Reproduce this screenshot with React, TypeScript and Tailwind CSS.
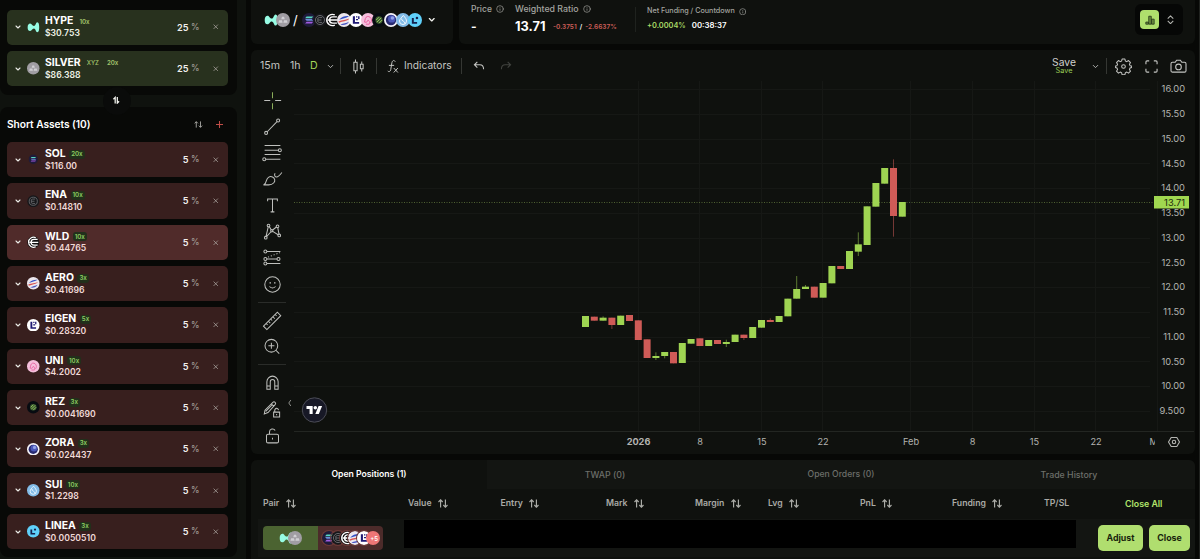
import { type ReactNode } from "react"
import { ChevronDown, Info, X } from "lucide-react"
import clsx from "clsx"

interface Asset {
  symbol: string
  price: string
  leverage: string
  weight: number
  tag?: string
  highlighted?: boolean
}

interface Candle {
  open: number
  close: number
  up: boolean
  high?: number
  low?: number
}

const longAssets: Asset[] = [
  { symbol: "HYPE", price: "$30.753", leverage: "10x", weight: 25 },
  { symbol: "SILVER", price: "$86.388", leverage: "20x", weight: 25, tag: "XYZ" },
]

const shortAssets: Asset[] = [
  { symbol: "SOL", price: "$116.00", leverage: "20x", weight: 5 },
  { symbol: "ENA", price: "$0.14810", leverage: "10x", weight: 5 },
  { symbol: "WLD", price: "$0.44765", leverage: "10x", weight: 5, highlighted: true },
  { symbol: "AERO", price: "$0.41696", leverage: "3x", weight: 5 },
  { symbol: "EIGEN", price: "$0.28320", leverage: "5x", weight: 5 },
  { symbol: "UNI", price: "$4.2002", leverage: "10x", weight: 5 },
  { symbol: "REZ", price: "$0.0041690", leverage: "3x", weight: 5 },
  { symbol: "ZORA", price: "$0.024437", leverage: "3x", weight: 5 },
  { symbol: "SUI", price: "$1.2298", leverage: "10x", weight: 5 },
  { symbol: "LINEA", price: "$0.0050510", leverage: "3x", weight: 5 },
]

// open/close hold the top and bottom of the body, in thirds of a pixel
const candles: Candle[] = [
  { open: 528, close: 561, up: true },
  { open: 530, close: 542, up: false },
  { open: 533, close: 542, up: true, high: 529 },
  { open: 533, close: 555, up: false, low: 567 },
  { open: 527, close: 555, up: true },
  { open: 525, close: 543, up: false },
  { open: 541, close: 600, up: false },
  { open: 598, close: 654, up: false },
  { open: 648, close: 654, up: true, high: 637, low: 660 },
  { open: 636, close: 648, up: true, low: 655 },
  { open: 636, close: 670, up: false },
  { open: 609, close: 669, up: true },
  { open: 597, close: 611, up: true },
  { open: 595, close: 618, up: false },
  { open: 600, close: 618, up: true },
  { open: 600, close: 612, up: false },
  { open: 606, close: 612, up: true, high: 599, low: 621 },
  { open: 584, close: 606, up: true },
  { open: 584, close: 594, up: false, low: 600 },
  { open: 561, close: 594, up: true },
  { open: 540, close: 563, up: true },
  { open: 540, close: 546, up: false, high: 535 },
  { open: 528, close: 546, up: true },
  { open: 476, close: 529, up: true },
  { open: 447, close: 476, up: true, high: 408 },
  { open: 440, close: 447, up: true, high: 435 },
  { open: 440, close: 473, up: false },
  { open: 429, close: 473, up: true },
  { open: 378, close: 430, up: true },
  { open: 378, close: 387, up: false },
  { open: 333, close: 387, up: true },
  { open: 313, close: 335, up: true, high: 277, low: 348 },
  { open: 199, close: 315, up: true },
  { open: 129, close: 200, up: true },
  { open: 84, close: 131, up: true },
  { open: 84, close: 228, up: false, high: 58, low: 290 },
  { open: 186, close: 230, up: true },
]

const prices = ["16.00", "15.50", "15.00", "14.50", "14.00", "13.50", "13.00", "12.50", "12.00", "11.50", "11.00", "10.50", "10.00", "9.500"]

const times = [
  { label: "2026", x: 344.5, bold: true },
  { label: "8", x: 406 },
  { label: "15", x: 468 },
  { label: "22", x: 529 },
  { label: "Feb", x: 617 },
  { label: "8", x: 678.5 },
  { label: "15", x: 740.5 },
  { label: "22", x: 802 },
  { label: "Mar", x: 864 },
]

const coinArt: Record<string, ReactNode> = {
  HYPE: <path d="M1 10c0-4 2-6 4-6 3 0 3 4 6 4s3-6 5.500-6C19 2 19.500 6 19.500 10s-.5 8-3 8-2.500-6-5.500-6-3 4-6 4-4-2-4-6z" fill="#97fce4" />,
  SILVER: (
    <>
      <circle cx="10" cy="10" r="10" fill="#a09da3" />
      <path d="M7.500 9l1-3.500h3l1 3.500zM3.500 14l1-3.500h4l1 3.500zM10.500 14l1-3.500h4l1 3.500z" fill="#d0cfd4" />
    </>
  ),
  SOL: (
    <>
      <circle cx="10" cy="10" r="10" fill="#1f1b3a" />
      <path d="M6.500 5H16l-2 2.500H4.500z" fill="#57d6c0" />
      <path d="M4.500 8.700H14l2 2.500H6.500z" fill="#6d8cdd" />
      <path d="M6.500 12.500H16L14 15H4.500z" fill="#a05be0" />
    </>
  ),
  ENA: (
    <>
      <circle cx="10" cy="10" r="9.500" fill="#16171a" />
      <circle cx="10" cy="10" r="6.500" fill="none" stroke="#74767a" strokeWidth="1.200" />
      <path d="M13 6.500H9a2.500 2.500 0 0 0-2 3.500 2.500 2.500 0 0 0 2 3.500h4M7 10h5" fill="none" stroke="#74767a" strokeWidth="1.200" />
    </>
  ),
  WLD: (
    <>
      <circle cx="10" cy="10" r="9.500" fill="#101010" />
      <path d="M17 5.500H11a4.500 4.500 0 0 0 0 9h6M4 10h14M14 2.800a8 8 0 1 0 0 14.400" fill="none" stroke="#fff" strokeWidth="2" />
    </>
  ),
  AERO: (
    <>
      <circle cx="10" cy="10" r="10" fill="#ece7ee" />
      <path d="M3 9.500C7 5 12 4 17 4.500 13 7 8 8 3 9.500z" fill="#3350c8" />
      <path d="M2 12c5-2 11-2 16-4-4 4-10 4-15 6z" fill="#d9534f" />
      <path d="M5 16.500c4-1.500 8-2 12-4-2 4-8 6-12 4z" fill="#4a58c4" />
    </>
  ),
  EIGEN: (
    <>
      <circle cx="10" cy="10" r="10" fill="#fff" />
      <path d="M5.500 4.500h3V13h6v2.500h-9zM10 4.500h2v2h-2zM13 4.500h2v4h-2zM10 8.500h3v2h-3z" fill="#1f1a74" />
    </>
  ),
  UNI: (
    <>
      <circle cx="10" cy="10" r="10" fill="#f5bfdc" />
      <path d="M5 13c1-4 1-7 4-8 3-.5 6 2 6 5s-1 4-3 5c.5-2 0-4-2-5-1 2-1 4-5 3zM7 16h5" fill="none" stroke="#e8609f" strokeWidth="1.400" />
    </>
  ),
  REZ: (
    <>
      <circle cx="10" cy="10" r="10" fill="#070b11" />
      <circle cx="10" cy="10" r="5.200" fill="#3d5b32" />
      <path d="M6 10l4-4M7 13l6-6M10 14.500l4.500-4.500" stroke="#a5d865" strokeWidth="1.200" />
    </>
  ),
  ZORA: (
    <>
      <circle cx="10" cy="10" r="10" fill="#f4f2f8" />
      <circle cx="10" cy="10" r="7.400" fill="#27296f" />
      <circle cx="11" cy="8.500" r="5.200" fill="#4c58b8" />
      <circle cx="12" cy="7" r="2.500" fill="#93a3ea" />
    </>
  ),
  SUI: (
    <>
      <circle cx="10" cy="10" r="10" fill="#83bce8" />
      <path d="M10.500 3.500c3 3.500 4.500 5.500 4.500 8a5 5 0 0 1-10 0c0-2.500 2.500-4.500 5.500-8zM8 8c-.5 4 5 3 5 7.500" fill="none" stroke="#f0f8ff" strokeWidth="1.400" />
    </>
  ),
  LINEA: (
    <>
      <circle cx="10" cy="10" r="10" fill="#5fd0fa" />
      <path d="M5.500 7h2.800v5.700H13v2.600H5.500z" fill="#14214d" />
      <circle cx="12.800" cy="7.300" r="1.800" fill="#14214d" />
    </>
  ),
}

function Coin({ symbol, className }: { symbol: string; className?: string }) {
  return (
    <svg viewBox="0 0 20 20" className={clsx("shrink-0", className)}>
      {coinArt[symbol]}
    </svg>
  )
}

function AssetRow({ asset, side }: { asset: Asset; side: "long" | "short" }) {
  const isLong = side === "long"
  return (
    <div
      className={clsx(
        "flex h-[35.400px] shrink-0 items-center rounded-[5px] pl-[6.500px] pr-[9px]",
        isLong ? "bg-[#28311e]" : asset.highlighted ? "bg-[#502b2a]" : "bg-[#381f1e]"
      )}
    >
      <ChevronDown className="size-[8px] text-[#ecece8]" strokeWidth={3.200} />
      <Coin symbol={asset.symbol} className={clsx("ml-[5.500px] size-[12.500px]", asset.symbol === "SOL" && "scale-75")} />
      <div className="ml-[5.500px] flex-1 pt-[1px]">
        <div className="flex h-[11.500px] items-center">
          <span className="text-[10.400px] font-bold leading-none text-white">{asset.symbol}</span>
          {asset.tag && <span className="ml-[6px] text-[6px] font-medium leading-none text-[#a3c46c]">{asset.tag}</span>}
          <span
            className={clsx(
              "text-[6.200px] font-semibold leading-none",
              isLong ? "text-[#a3c46c]" : "rounded-[3px] bg-[#22301b] px-[2px] py-[1.500px] text-[#8fce62]",
              asset.tag ? "ml-[8px]" : isLong ? "ml-[6px]" : "ml-[3.500px]"
            )}
          >
            {asset.leverage}
          </span>
        </div>
        <div className={clsx("flex h-[12px] items-center text-[8.650px] font-semibold leading-none", isLong ? "text-[#eef2e6]" : "text-[#f0d9d7]")}>
          {asset.price}
        </div>
      </div>
      <span className="text-[9.200px] font-semibold leading-none text-[#f1efed]">{asset.weight}</span>
      <span className="ml-[2.500px] w-[7px] text-[8.500px] font-medium leading-none text-[#a19c96]">%</span>
      <X className="ml-[13.500px] size-[7.500px] text-[#a8a29c]" strokeWidth={2.500} />
    </div>
  )
}

function SortIcon() {
  return (
    <svg viewBox="0 0 10 9" className="h-[9px] w-[10px]" fill="none" stroke="currentColor" strokeWidth="1.150">
      <path d="M2.600 8.500V1M.5 3l2.100-2.200L4.700 3M7.400.5V8M5.300 6l2.100 2.200L9.500 6" />
    </svg>
  )
}

function Sidebar() {
  return (
    <aside className="flex h-full w-[246px] shrink-0 flex-col bg-[#0f120e]">
      <div className="flex h-[95px] w-[237px] shrink-0 flex-col gap-[6px] rounded-b-lg bg-[#080907] pb-[8px] pl-[7px] pr-[9px] pt-[9.500px]">
        {longAssets.map((asset) => (
          <AssetRow key={asset.symbol} asset={asset} side="long" />
        ))}
      </div>
      <div className="z-10 -my-[8px] ml-[102.500px] flex size-[28px] shrink-0 items-center justify-center rounded-full bg-[#0a0b0a]">
        <svg viewBox="0 0 12 12" className="-mt-[2px] size-[8.500px]" fill="none" stroke="#f2f2ee" strokeWidth="1.800">
          <path d="M4.500 10.500V2L2 4.500M7.500 1.500V10L10 7.500" />
        </svg>
      </div>
      <div className="flex h-[450px] w-[237px] shrink-0 flex-col rounded-lg bg-[#080907] pl-[7px] pr-[9px]">
        <div className="flex h-[35px] shrink-0 items-center pr-[5px]">
          <h2 className="flex-1 text-[10.200px] font-semibold leading-none tracking-[-0.050px] text-white">Short Assets (10)</h2>
          <svg viewBox="0 0 16 12" className="mr-[13.500px] h-[7px] w-[9px]" fill="none" stroke="#b9b9b4" strokeWidth="1.500">
            <path d="M4 11.500V1M1 4l3-3 3 3M11.500.5V11M8.500 8l3 3 3-3" />
          </svg>
          <svg viewBox="0 0 10 10" className="size-[7px]" stroke="#c04e48" strokeWidth="1.500">
            <path d="M5 0v10M0 5h10" />
          </svg>
        </div>
        <div className="flex flex-col gap-[5.950px]">
          {shortAssets.map((asset) => (
            <AssetRow key={asset.symbol} asset={asset} side="short" />
          ))}
        </div>
      </div>
    </aside>
  )
}

function Header() {
  return (
    <header className="flex h-[44px] gap-[6px]">
      <div className="flex w-[202px] items-center rounded-b-md bg-[#0f110e] pb-[4px] pl-[12.500px]">
        <Coin symbol="HYPE" className="size-[14px]" />
        <Coin symbol="SILVER" className="-ml-[2px] size-[14px]" />
        <span className="mx-[3.500px] w-[5px] text-[13px] leading-none text-white">/</span>
        <div className="flex">
          {shortAssets.map((asset) => (
            <Coin key={asset.symbol} symbol={asset.symbol} className="-mr-[2.200px] size-[14px]" />
          ))}
        </div>
        <ChevronDown className="ml-[7px] size-[9.500px] text-[#f1f1ee]" strokeWidth={3.200} />
      </div>
      <div className="flex w-[736px] rounded-b-md bg-[#0f110e] pl-[12px]">
        <div className="w-[44px]">
          <div className="flex h-[18px] items-center gap-[4px] text-[8.500px] font-medium text-[#a4a5a0]">
            Price <Info className="size-[8px]" />
          </div>
          <div className="flex h-[18px] items-center text-[12px] font-bold text-white">-</div>
        </div>
        <div className="w-[120px]">
          <div className="flex h-[18px] items-center gap-[4px] whitespace-nowrap text-[8.800px] font-medium text-[#a4a5a0]">
            Weighted Ratio <Info className="size-[8px]" />
          </div>
          <div className="flex h-[18px] items-center whitespace-nowrap">
            <span className="w-[32px] text-[12.800px] font-bold text-white">13.71</span>
            <span className="ml-[6px] flex gap-[3px] pt-[2px] text-[6.500px] font-semibold text-[#cc5e58]">
              -0.3751 <span className="text-white">/</span> -2.6637%
            </span>
          </div>
        </div>
        <div className="mt-[7px] h-[25px] w-px bg-[#1f221e]" />
        <div className="pl-[11px]">
          <div className="flex h-[23px] items-center gap-[4px] text-[7.200px] font-medium text-[#a4a5a0]">
            Net Funding / Countdown <Info className="size-[7.500px]" />
          </div>
          <div className="flex h-[6px] items-center gap-[6px] text-[7.400px] font-semibold">
            <span className="text-[#a9db66]">+0.0004%</span>
            <span className="text-[7.800px] text-white">00:38:37</span>
          </div>
        </div>
        <div className="ml-auto mr-[12px] mt-[4px] flex h-[31px] w-[48px] items-center rounded-md bg-[#060706] pl-[5px]">
          <div className="flex size-[19px] items-center justify-center rounded-[4px] bg-[#afdf6d]">
            <svg viewBox="0 0 12 12" className="size-[10px]" fill="#6f9440" stroke="#27371a" strokeWidth="1">
              <path d="M1 8.500h3V11H1zM4.500 1.500h3V11h-3zM8 5h3v6H8z" />
            </svg>
          </div>
          <svg viewBox="0 0 10 12" className="ml-[7px] h-[9.500px] w-[9px]" fill="none" stroke="#b5b6b1" strokeWidth="1.300" strokeLinejoin="round">
            <path d="M1.500 4.500L5 1l3.500 3.500M1.500 7.500L5 11l3.500-3.500" />
          </svg>
        </div>
      </div>
    </header>
  )
}

const toolIcons: Record<string, ReactNode> = {
  cross: (
    <>
      <path d="M14 3v8M14 17.500v8" stroke="#8aad5a" />
      <path d="M3 14h8M17.500 14h8" />
    </>
  ),
  trend: (
    <>
      <circle cx="5.500" cy="22.500" r="2" />
      <circle cx="21.500" cy="6" r="2" />
      <path d="M7 21L20 7.500" />
    </>
  ),
  fib: (
    <>
      <path d="M3.500 4.800h21M3.500 11h18.300M3.500 16.800h21M5 22.900h19.500" />
      <circle cx="23.800" cy="11" r="2" />
      <circle cx="3" cy="22.900" r="2" />
    </>
  ),
  brush: (
    <>
      <path d="M2 22.500c2-1 3.500-3.500 4-6 1-4 4.500-6 8-4.500 3.500 1.500 4 5.500 1.500 8-2 2-4 2.500-6.500 2.500z" />
      <path d="M17.500 7c-1.500 2-.5 4.500 1.500 5 1.500.3 4.500-2 7.500-6" />
    </>
  ),
  text: <path d="M7.500 8.200V5.300h13v2.900M14 5.300v17.200M11.500 22.500h5" />,
  pattern: (
    <>
      <circle cx="8.700" cy="6" r="1.800" />
      <circle cx="20.700" cy="7" r="1.800" />
      <circle cx="5" cy="22.300" r="1.800" />
      <circle cx="23" cy="19.300" r="1.800" />
      <circle cx="13" cy="13" r="1.500" />
      <path d="M8.300 7.800L5.400 20.500M9.700 7.500l2.500 4.300M14.200 12l5-4M21 8.800l1.700 8.700M6 20.800l6-6.500M14.300 13.800l7.200 4.500" />
    </>
  ),
  forecast: (
    <>
      <circle cx="4.500" cy="6" r="2" />
      <circle cx="4.500" cy="16" r="2" />
      <circle cx="4.500" cy="22" r="2" />
      <circle cx="22" cy="16" r="2" />
      <path d="M6.500 6h18M6.500 16H20M6.500 22h18" />
      <path d="M8 13.500l16-6" strokeDasharray="1.500 2.500" />
    </>
  ),
  smile: (
    <>
      <circle cx="14" cy="14" r="10.300" />
      <path d="M10 16.500c1.300 2.700 6.700 2.700 8 0" />
      <path d="M11 11v1.500M17 11v1.500" strokeWidth="2" />
    </>
  ),
  ruler: (
    <>
      <path d="M2 21.500L20.500 3l4.500 4.500L6.500 26z" />
      <path d="M5.500 18l2 2M8.500 15l2.500 2.500M11.500 12l2 2M14.500 9l2.500 2.500M17.500 6l2 2" />
    </>
  ),
  zoom: (
    <>
      <circle cx="12.500" cy="13" r="8.500" />
      <path d="M18.500 19l4.500 4.500M12.500 9v8M8.500 13h8" />
    </>
  ),
  magnet: <path d="M6.500 23V13a7.500 7.500 0 0 1 15 0v10H17V13a3 3 0 0 0-6 0v10zM6.500 18.800H11M17 18.800h4.500" />,
  pencilLock: (
    <>
      <path d="M3 20l1-5L14.500 4.500a2 2 0 0 1 3 3L8 18zM12.500 6.500l3.500 3.500M5 16.500L13.500 8" />
      <path d="M15.500 17.500h8v6.500h-8zM17 17.500v-2.300a2.500 2.500 0 0 1 5-.4M19.500 20v1.500" />
    </>
  ),
  lock: (
    <>
      <rect x="6" y="11" width="16" height="11.500" rx="2" />
      <path d="M10 11V8a4 4 0 0 1 7.500-2M14 15.500V18" />
    </>
  ),
}

function ToolIcon({ name }: { name: string }) {
  return (
    <svg viewBox="0 0 28 28" className="size-[21px] shrink-0" fill="none" stroke="#bfc0bd" strokeWidth="1.350">
      {toolIcons[name]}
    </svg>
  )
}

function ToolRail() {
  return (
    <div className="flex w-[43px] shrink-0 flex-col items-center pr-[1px] pt-[8.500px]">
      <div className="flex flex-col gap-[5.300px]">
        {["cross", "trend", "fib", "brush", "text", "pattern", "forecast", "smile"].map((name) => (
          <ToolIcon key={name} name={name} />
        ))}
      </div>
      <div className="my-[7px] h-px w-[28px] bg-[#2a2c29]" />
      <div className="flex flex-col gap-[5.300px]">
        <ToolIcon name="ruler" />
        <ToolIcon name="zoom" />
      </div>
      <div className="my-[7px] h-px w-[28px] bg-[#2a2c29]" />
      <div className="flex flex-col gap-[6px]">
        <ToolIcon name="magnet" />
        <ToolIcon name="pencilLock" />
        <ToolIcon name="lock" />
      </div>
    </div>
  )
}

function Divider() {
  return <div className="h-[16px] w-px shrink-0 bg-[#353733]" />
}

function ChartToolbar() {
  return (
    <div className="flex h-[31px] shrink-0 items-center pl-[9px] pt-[1px] text-[10.600px] text-[#c4c5c2]">
      <span className="w-[30px]">15m</span>
      <span className="w-[20px]">1h</span>
      <span className="w-[16px] text-[#a3d659]">D</span>
      <ChevronDown className="mr-[5px] size-[9px]" strokeWidth={2.300} />
      <Divider />
      <svg viewBox="0 0 14 16" className="mx-[11px] h-[15px] w-[13px]" fill="none" stroke="currentColor" strokeWidth="1.100">
        <path d="M2 3.500h3.500v9H2zM3.750.5v3M3.750 12.500v3M9 5.500h3v5H9zM10.500 2.500v3M10.500 10.500v3" />
      </svg>
      <Divider />
      <svg viewBox="0 0 16 18" className="ml-[10px] mr-[5px] h-[15px] w-[12px]" fill="none" stroke="currentColor" strokeWidth="1.300">
        <path d="M11 2.500C9-.5 7 1.500 6.500 4L5 13c-.5 3-2.500 3.500-4 2M2.500 7.500h7M9 11l5.500 6M14.500 11L9 17" />
      </svg>
      <span className="mr-[10px] w-[47px] text-[10.200px]">Indicators</span>
      <Divider />
      <svg viewBox="0 0 14 12" className="ml-[11px] h-[10px] w-[12px]" fill="none" stroke="currentColor" strokeWidth="1.300">
        <path d="M5 1L1.500 4.500 5 8M1.500 4.500H8c3 0 4.500 2 4.500 5.500" />
      </svg>
      <svg viewBox="0 0 14 12" className="ml-[15px] h-[10px] w-[12px]" fill="none" stroke="#41433f" strokeWidth="1.300">
        <path d="M9 1l3.500 3.500L9 8M12.500 4.500H6c-3 0-4.500 2-4.500 5.500" />
      </svg>
      <div className="ml-auto mr-[15px] flex w-[24px] flex-col items-center">
        <span className="text-[10.300px] leading-[10.500px] text-[#cfd0cd]">Save</span>
        <span className="text-[7.300px] leading-[8px] text-[#9ccf58]">Save</span>
      </div>
      <ChevronDown className="mr-[6px] size-[9px]" strokeWidth={2.300} />
      <Divider />
      <svg viewBox="0 0 24 24" className="ml-[8px] size-[17px]" fill="none" stroke="currentColor" strokeWidth="1.450" strokeLinejoin="round">
        <path d="M10 1.500h4l.7 2.800 1.900.8 2.500-1.500 2.800 2.800-1.500 2.500.8 1.900 2.300.6v1.900l-2.300.9-.8 1.900 1.500 2.500-2.800 2.800-2.500-1.500-1.900.8-.7 2.800h-4l-.7-2.800-1.900-.8-2.500 1.500-2.800-2.800 1.500-2.500-.8-1.900-2.300-.9v-1.900l2.300-.6.8-1.900-1.500-2.500 2.800-2.800 2.500 1.500 1.900-.8z" />
        <circle cx="12" cy="12" r="2.600" />
      </svg>
      <svg viewBox="0 0 14 14" className="ml-[12.500px] size-[13px]" fill="none" stroke="currentColor" strokeWidth="1.200">
        <path d="M1 4.500V2.200C1 1.500 1.500 1 2.200 1h2.300M9.500 1h2.300c.7 0 1.200.5 1.200 1.200v2.300M13 9.500v2.300c0 .7-.5 1.200-1.200 1.200H9.500M4.500 13H2.200C1.500 13 1 12.500 1 11.800V9.500" />
      </svg>
      <svg viewBox="0 0 18 16" className="ml-[12.500px] mr-[8px] h-[15px] w-[17px]" fill="none" stroke="currentColor" strokeWidth="1.150">
        <path d="M2.500 3.500h3L7 1.300h4l1.500 2.200h3c.8 0 1.500.7 1.500 1.500v7.500c0 .8-.7 1.500-1.500 1.500h-13C1.700 14 1 13.300 1 12.500V5c0-.8.7-1.500 1.500-1.500z" />
        <circle cx="9" cy="8.500" r="3" />
      </svg>
    </div>
  )
}

function PriceChart() {
  return (
    <svg width="900" height="373" viewBox="0 0 900 373" className="block shrink-0 overflow-visible font-['Inter',sans-serif]">
      <defs>
        <clipPath id="time-axis">
          <rect x="0" y="350" width="861" height="23" />
        </clipPath>
      </defs>
      {prices.map((price, i) => (
        <g key={price}>
          <path d={`M0 ${Math.round(8 + i * 24.77) + 0.5}H856`} stroke="#161815" />
          <text x="891" y={11.200 + i * 24.77} textAnchor="end" fontSize="9.300" fill="#b3b4b0">
            {price}
          </text>
        </g>
      ))}
      {times.map((time) => (
        <g key={time.x}>
          <path d={`M${Math.round(time.x) - 0.5} 0V350`} stroke="#161815" />
          <text
            x={time.x}
            y="364"
            textAnchor="middle"
            fontSize="9.200"
            fontWeight={time.bold ? 700 : 400}
            fill="#b3b4b0"
            clipPath="url(#time-axis)"
          >
            {time.label}
          </text>
        </g>
      ))}
      <path d="M0 350.500H900" stroke="#232622" />
      <path d="M0 121.500H860" stroke="#4f6132" strokeDasharray="1 1.500" />
      {candles.map((candle, i) => {
        const x = 288 + i * 8.8
        const color = candle.up ? "#9fd452" : "#cf5b57"
        const top = candle.open / 3 + 59
        const bottom = candle.close / 3 + 59
        return (
          <g key={i}>
            <path
              d={`M${x + 3.5} ${(candle.high ?? candle.open) / 3 + 59}V${(candle.low ?? candle.close) / 3 + 59}`}
              stroke={color}
              strokeOpacity="0.600"
              strokeWidth="0.900"
            />
            <rect x={x} y={top} width="7" height={bottom - top} fill={color} />
          </g>
        )
      })}
      <rect x="860" y="115" width="35" height="12.500" fill="#a0d750" />
      <text x="891" y="124.600" textAnchor="end" fontSize="9.300" fill="#1c2a0d">
        13.71
      </text>
      <circle cx="20.500" cy="329" r="12.200" fill="#171826" stroke="#4b4c56" />
      <g transform="translate(12.500 323.200) scale(.44)" fill="#fff">
        <path d="M14 22H7V11H0V4h14v18zM28 22h-8l7.500-18h8L28 22z" />
        <circle cx="20" cy="8" r="4" />
      </g>
      <path d="M-3.200 319l-2 3 2 3" fill="none" stroke="#8c8d89" />
      <g fill="none" stroke="#b3b4b0" strokeWidth="1.100">
        <path d="M877.200 356.500h5.600l2.700 4.500-2.700 4.500h-5.600l-2.700-4.500z" />
        <circle cx="880" cy="361" r="1.700" />
      </g>
    </svg>
  )
}

const columns = [
  { label: "Pair", width: "w-[145px]" },
  { label: "Value", width: "w-[92.500px]" },
  { label: "Entry", width: "w-[105.500px]" },
  { label: "Mark", width: "w-[89px]" },
  { label: "Margin", width: "w-[73px]" },
  { label: "Lvg", width: "w-[92px]" },
  { label: "PnL", width: "w-[92px]" },
  { label: "Funding", width: "w-[92px]" },
]

function Positions() {
  return (
    <section className="flex h-[99px] w-[944px] flex-col overflow-hidden rounded-t-md bg-[#0f110e]">
      <div className="flex h-[29px] shrink-0 text-[8.800px] font-medium text-[#6d6f6a]">
        <div className="flex w-[236px] items-center justify-center text-[8.650px] font-semibold text-white">Open Positions (1)</div>
        <div className="flex w-[236px] items-center justify-center bg-[#131512]">TWAP (0)</div>
        <div className="flex w-[236px] items-center justify-center bg-[#131512] text-[8.650px]">Open Orders (0)</div>
        <div className="flex flex-1 items-center justify-center bg-[#131512] pr-[16px]">Trade History</div>
      </div>
      <div className="flex h-[30px] shrink-0 items-center pl-[12px] text-[8.700px] font-semibold text-[#aaaba6]">
        {columns.map((column) => (
          <div key={column.label} className={clsx("flex shrink-0 items-center gap-[6.500px]", column.width)}>
            {column.label}
            <SortIcon />
          </div>
        ))}
        <div className="w-[81px]">TP/SL</div>
        <div className="text-[8.800px] text-[#b2e56c]">Close All</div>
      </div>
      <div className="ml-[7px] flex h-[38px] bg-[#131512] pl-[5px]">
        <div className="mt-[7px] flex h-[24px] w-[120px] overflow-hidden rounded-[4px]">
          <div className="flex w-[55px] items-center justify-center bg-[#4b6331]">
            <Coin symbol="HYPE" className="-mr-[5px] size-[14px]" />
            <Coin symbol="SILVER" className="size-[14px]" />
          </div>
          <div className="flex flex-1 items-center bg-[#4c2b2a] pl-[4px]">
            {["SOL", "ENA", "WLD", "AERO", "EIGEN"].map((symbol) => (
              <Coin key={symbol} symbol={symbol} className="-mr-[5.200px] size-[14px] rounded-full ring-1 ring-[#6d3a38]" />
            ))}
            <span className="z-0 flex size-[14px] items-center justify-center rounded-full bg-[#ee7676] pl-[2px] text-[6px] font-semibold text-white">
              +5
            </span>
          </div>
        </div>
        <div className="ml-[21px] mt-[1px] h-[27.500px] w-[672px] bg-black" />
        <div className="ml-[22px] mt-[5.500px] flex h-[26.500px] gap-[6px] text-[8.800px] font-bold text-[#18240d]">
          <button className="w-[45px] rounded-[5px] bg-[#b0de6f]">Adjust</button>
          <button className="w-[41px] rounded-[5px] bg-[#b0de6f]">Close</button>
        </div>
      </div>
    </section>
  )
}

export default function App() {
  return (
    <div className="flex h-[559px] w-[1200px] overflow-hidden bg-[#070806] font-['Inter',sans-serif]">
      <Sidebar />
      <main className="ml-[5px] flex w-[948px] shrink-0 flex-col gap-[6px]">
        <Header />
        <section className="flex h-[404px] w-[944px] shrink-0 flex-col rounded-md bg-[#0f110e]">
          <ChartToolbar />
          <div className="flex">
            <ToolRail />
            <PriceChart />
          </div>
        </section>
        <Positions />
      </main>
      <div className="w-px bg-[#20221f]" />
    </div>
  )
}
